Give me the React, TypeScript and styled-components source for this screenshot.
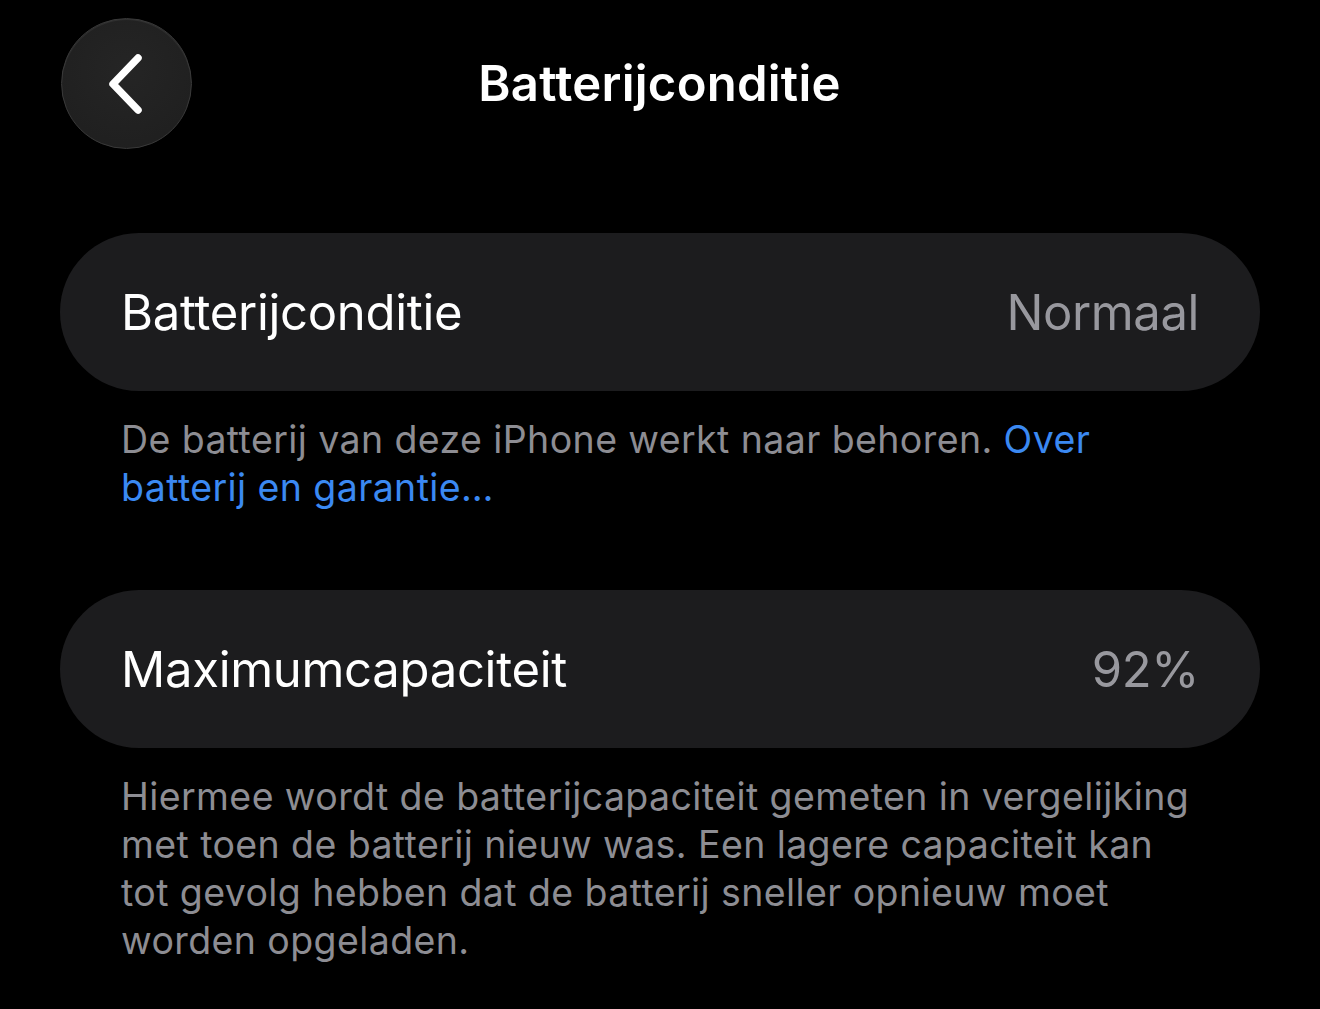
import React from "react";
import styled, { createGlobalStyle } from "styled-components";

const GlobalStyle = createGlobalStyle`
  html, body {
    margin: 0;
    padding: 0;
    background: #000;
  }
  body {
    font-family: Inter, "Noto Sans", "Liberation Sans", sans-serif;
    -webkit-font-smoothing: antialiased;
  }
`;

const Screen = styled.div`
  width: 1320px;
  min-height: 1009px;
  background: #000;
  color: #fff;
  box-sizing: border-box;
  padding: 18px 60px 0;
`;

const NavBar = styled.header`
  display: grid;
  grid-template-columns: 131px 1fr 131px;
  align-items: center;
  height: 131px;
  margin-left: 1px;
`;

const BackButton = styled.button`
  width: 131px;
  height: 131px;
  border-radius: 50%;
  background: radial-gradient(circle at 50% 40%, #252525 0%, #1e1e1e 100%);
  border: 1.5px solid #3a3a3a;
  box-shadow: inset 0 1px 1px rgba(255, 255, 255, 0.08);
  display: flex;
  align-items: center;
  justify-content: center;
  padding: 0;
  cursor: pointer;
`;

const NavTitle = styled.h1`
  margin: 0;
  text-align: center;
  font-size: 49px;
  font-weight: 600;
  letter-spacing: 0.25px;
  transform: translateX(-1px);
`;

const Section = styled.section<{ $top: number }>`
  margin-top: ${(p) => p.$top}px;
`;

const Card = styled.div`
  height: 158px;
  border-radius: 79px;
  background: #1c1c1e;
  display: flex;
  align-items: center;
  justify-content: space-between;
  padding: 0 61px;
  box-sizing: border-box;
`;

const RowLabel = styled.span`
  font-size: 49px;
  font-weight: 400;
  letter-spacing: -0.3px;
  color: #fff;
`;

const RowValue = styled.span`
  font-size: 49px;
  font-weight: 400;
  letter-spacing: -0.4px;
  color: #98989e;
`;

const Footer = styled.p`
  margin: 25px 0 0;
  padding: 0 61px;
  font-size: 37.5px;
  line-height: 48px;
  letter-spacing: 0.4px;
  color: #8d8d93;
`;

const Link = styled.a`
  color: #3b89f2;
  text-decoration: none;
`;

const Chevron = () => (
  <svg width="44" height="64" viewBox="0 0 44 64" fill="none">
    <path
      d="M33 6 L8 32 L33 58"
      stroke="#fff"
      strokeWidth="7.5"
      strokeLinecap="round"
      strokeLinejoin="round"
    />
  </svg>
);

export default function App() {
  return (
    <Screen>
      <GlobalStyle />
      <NavBar>
        <BackButton aria-label="Terug">
          <Chevron />
        </BackButton>
        <NavTitle>Batterijconditie</NavTitle>
        <span />
      </NavBar>

      <Section $top={84}>
        <Card>
          <RowLabel>Batterijconditie</RowLabel>
          <RowValue>Normaal</RowValue>
        </Card>
        <Footer>
          De batterij van deze iPhone werkt naar behoren.{" "}
          <Link href="#">Over batterij en garantie…</Link>
        </Footer>
      </Section>

      <Section $top={78}>
        <Card>
          <RowLabel>Maximumcapaciteit</RowLabel>
          <RowValue>92%</RowValue>
        </Card>
        <Footer>
          Hiermee wordt de batterijcapaciteit gemeten in vergelijking met toen
          de batterij nieuw was. Een lagere capaciteit kan tot gevolg hebben
          dat de batterij sneller opnieuw moet worden opgeladen.
        </Footer>
      </Section>
    </Screen>
  );
}
